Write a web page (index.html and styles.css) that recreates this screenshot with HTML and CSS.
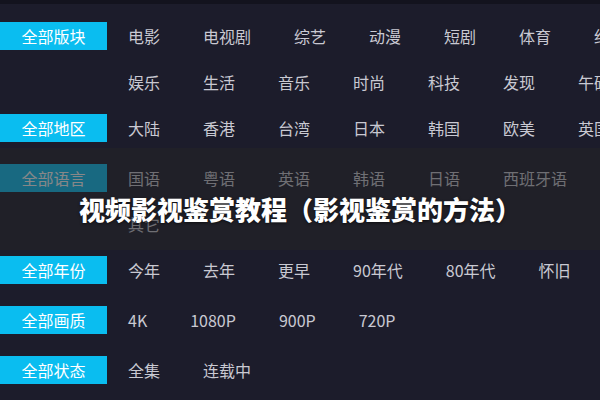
FILE: index.html
```html
<!DOCTYPE html>
<html lang="zh-CN">
<head>
    <meta charset="UTF-8">
    <meta name="viewport" content="width=device-width, initial-scale=1.0">
    <title>视频影视鉴赏教程</title>
    <link rel="stylesheet" href="styles.css">
</head>
<body>
    <div class="page">
        <div class="topbar"></div>

        <div class="filters">
            <div class="row row-wrap">
                <span class="label">全部版块</span>
                <ul class="items">
                    <li>电影</li>
                    <li>电视剧</li>
                    <li>综艺</li>
                    <li>动漫</li>
                    <li>短剧</li>
                    <li>体育</li>
                    <li>纪录</li>
                    <li>娱乐</li>
                    <li>生活</li>
                    <li>音乐</li>
                    <li>时尚</li>
                    <li>科技</li>
                    <li>发现</li>
                    <li>午砚</li>
                </ul>
            </div>
            <div class="row">
                <span class="label">全部地区</span>
                <ul class="items">
                    <li>大陆</li>
                    <li>香港</li>
                    <li>台湾</li>
                    <li>日本</li>
                    <li>韩国</li>
                    <li>欧美</li>
                    <li>英国</li>
                </ul>
            </div>
            <div class="row row-wrap">
                <span class="label">全部语言</span>
                <ul class="items">
                    <li>国语</li>
                    <li>粤语</li>
                    <li>英语</li>
                    <li>韩语</li>
                    <li>日语</li>
                    <li>西班牙语</li>
                    <li>其它</li>
                </ul>
            </div>
            <div class="row">
                <span class="label">全部年份</span>
                <ul class="items">
                    <li>今年</li>
                    <li>去年</li>
                    <li>更早</li>
                    <li>90年代</li>
                    <li>80年代</li>
                    <li>怀旧</li>
                </ul>
            </div>
            <div class="row">
                <span class="label">全部画质</span>
                <ul class="items">
                    <li>4K</li>
                    <li>1080P</li>
                    <li>900P</li>
                    <li>720P</li>
                </ul>
            </div>
            <div class="row">
                <span class="label">全部状态</span>
                <ul class="items">
                    <li>全集</li>
                    <li>连载中</li>
                </ul>
            </div>
        </div>

        <!-- 标题遮罩 -->
        <div class="banner">
            <h1 class="banner-title">视频影视鉴赏教程（影视鉴赏的方法）</h1>
        </div>
    </div>
</body>
</html>
```

FILE: styles.css
```css
html, body {
    margin: 0;
    padding: 0;
    background-color: #1c1c2b;
}

body {
    width: 600px;
    height: 400px;
    overflow: hidden;
    font-family: "Noto Sans CJK SC", "Noto Sans", sans-serif;
}

.page {
    position: relative;
    height: 400px;
}

.topbar {
    height: 4px;
    background-color: #13131e;
}

.filters {
    padding-top: 18px;
}

.row {
    display: flex;
    align-items: flex-start;
    margin-bottom: 22px;
}

.row-wrap {
    margin-bottom: 18px;
}

.label {
    flex: none;
    width: 107px;
    height: 28px;
    line-height: 28px;
    text-align: center;
    font-size: 16px;
    color: #ffffff;
    background-color: #0abdf0;
}

.items {
    flex: none;
    width: 547px;
    display: flex;
    flex-wrap: wrap;
    row-gap: 18px;
    margin: 0 0 0 21px;
    padding: 0;
    list-style: none;
}

    .items li {
        height: 28px;
        line-height: 28px;
        margin-right: 43px;
        font-size: 16px;
        color: #c9c9d2;
        white-space: nowrap;
    }

.banner {
    position: absolute;
    left: 0;
    right: 0;
    top: 148px;
    height: 102px;
    background-color: rgba(36, 36, 38, 0.55);
    display: flex;
    justify-content: center;
    align-items: center;
}

.banner-title {
    margin: 18px 0 0 0;
    font-size: 26px;
    font-weight: 900;
    color: #ffffff;
    white-space: nowrap;
    text-shadow: 0 1px 3px rgba(0, 0, 0, 0.6);
}
```
